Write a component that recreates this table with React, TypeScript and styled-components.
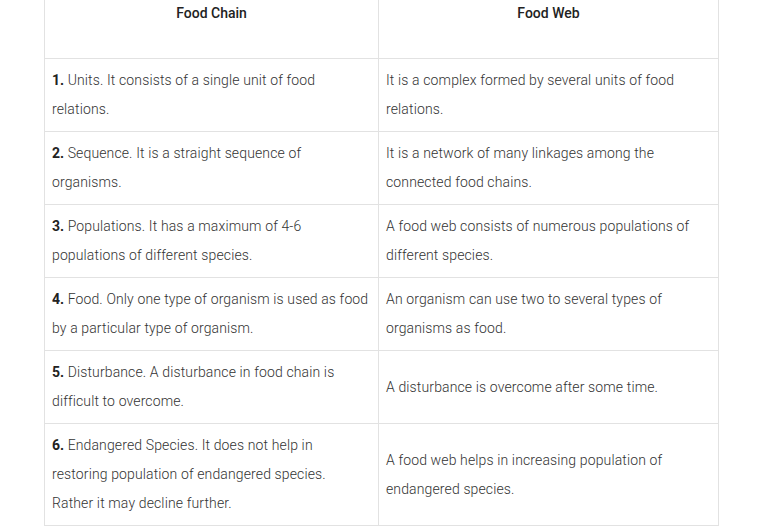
import styled, { createGlobalStyle } from "styled-components";

const GlobalStyle = createGlobalStyle`
  body {
    margin: 0;
    background: #fff;
    font-family: Roboto, "Noto Sans", sans-serif;
  }
`;

const rows = [
  {
    n: "1.",
    chain: "Units. It consists of a single unit of food relations.",
    web: "It is a complex formed by several units of food relations.",
  },
  {
    n: "2.",
    chain: "Sequence. It is a straight sequence of organisms.",
    web: "It is a network of many linkages among the connected food chains.",
  },
  {
    n: "3.",
    chain: "Populations. It has a maximum of 4-6 populations of different species.",
    web: "A food web consists of numerous populations of different species.",
  },
  {
    n: "4.",
    chain: "Food. Only one type of organism is used as food by a particular type of organism.",
    web: "An organism can use two to several types of organisms as food.",
  },
  {
    n: "5.",
    chain: "Disturbance. A disturbance in food chain is difficult to overcome.",
    web: "A disturbance is overcome after some time.",
  },
  {
    n: "6.",
    chain: "Endangered Species. It does not help in restoring population of endangered species. Rather it may decline further.",
    web: "A food web helps in increasing population of endangered species.",
  },
];

const App = () => {
  return (
    <Page>
      <GlobalStyle />
      <Table>
        <colgroup>
          <col style={{ width: 334 }} />
          <col style={{ width: 340 }} />
        </colgroup>
        <thead>
          <tr>
            <Head>Food Chain</Head>
            <Head>Food Web</Head>
          </tr>
        </thead>
        <tbody>
          {rows.map((r) => (
            <tr key={r.n}>
              <Cell>
                <Num>{r.n}</Num> {r.chain}
              </Cell>
              <Cell>{r.web}</Cell>
            </tr>
          ))}
        </tbody>
      </Table>
    </Page>
  );
};

export default App;

const Page = styled.div`
  width: 761px;
  height: 531px;
  overflow: hidden;
  padding-left: 44px;
  box-sizing: border-box;
`;

const Table = styled.table`
  width: 675px;
  border-collapse: collapse;
  table-layout: fixed;
`;

const Head = styled.th`
  height: 58px;
  box-sizing: border-box;
  padding: 0 8px 32px;
  line-height: 26px;
  font-size: 14px;
  font-weight: 500;
  color: #222;
  text-align: center;
  vertical-align: top;
  border: 1px solid #e2e2e2;
  border-top: none;
`;

const Cell = styled.td`
  padding: 7px 8px 7px 7px;
  line-height: 29px;
  font-size: 14px;
  font-weight: 300;
  letter-spacing: 0.13px;
  color: #333;
  vertical-align: middle;
  border: 1px solid #e2e2e2;
`;

const Num = styled.b`
  color: #222;
  font-weight: 700;
  letter-spacing: 0;
`;
